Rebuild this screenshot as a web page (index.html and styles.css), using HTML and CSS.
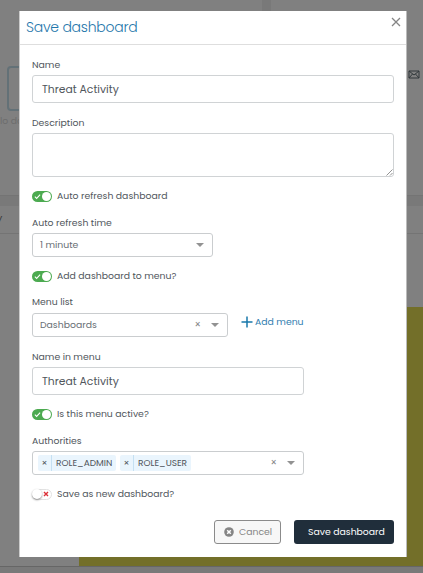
FILE: index.html
```html
<!DOCTYPE html>
<html lang="en">
<head>
<meta charset="utf-8">
<title>Save dashboard</title>
<link rel="stylesheet" href="styles.css">
</head>
<body>
<div class="page">
  <div class="top-panels">
    <div class="panel panel-filter"><div class="ghost-input"></div><div class="ghost-text">lo data</div></div>
    <div class="panel panel-mail">
      <svg class="mail" viewBox="0 0 12 9"><path d="M1 1h10v7H1zM1 1l5 4 5-4M1 8l3.500-4M11 8L7.500 4" fill="none" stroke="#30373a" stroke-width="1"/></svg>
    </div>
  </div>
  <div class="chart-panel">
    <div class="chart-head">y</div>
    <div class="chart-body"><div class="chart-fill"></div></div>
  </div>
</div>
<div class="modal">
  <header class="modal-head">
    <h1>Save dashboard</h1>
    <svg class="close" viewBox="0 0 10 10"><path d="M1 1l8 8M9 1L1 9" stroke="#858585" stroke-width="1.300" fill="none"/></svg>
  </header>
  <form class="modal-body">
    <label class="label">Name</label>
    <div class="input">Threat Activity</div>
    <label class="label label-desc">Description</label>
    <div class="textarea"><svg class="grip" viewBox="0 0 7 7"><path d="M.5 6.500l6-6M4 6.500L6.500 4" stroke="#777" stroke-width=".8"/></svg></div>
    <div class="switch-row">
      <span class="switch on"><svg viewBox="0 0 8 8"><path d="M1 4.200l2 2L7 1.800" fill="none" stroke="#fff" stroke-width="1.200"/></svg></span><span>Auto refresh dashboard</span>
    </div>
    <label class="label label-after">Auto refresh time</label>
    <div class="select select-time"><span>1 minute</span><i class="caret"></i></div>
    <div class="switch-row">
      <span class="switch on"><svg viewBox="0 0 8 8"><path d="M1 4.200l2 2L7 1.800" fill="none" stroke="#fff" stroke-width="1.200"/></svg></span><span>Add dashboard to menu?</span>
    </div>
    <label class="label label-list">Menu list</label>
    <div class="list-row">
      <div class="select select-list"><span>Dashboards</span><span class="clear">×</span><i class="caret"></i></div>
      <a class="add-menu"><svg viewBox="0 0 12 12"><path d="M6 .5v11M.5 6h11" stroke="#1878ab" stroke-width="1.500"/></svg><span>Add menu</span></a>
    </div>
    <label class="label label-after">Name in menu</label>
    <div class="input input-menu">Threat Activity</div>
    <div class="switch-row">
      <span class="switch on"><svg viewBox="0 0 8 8"><path d="M1 4.200l2 2L7 1.800" fill="none" stroke="#fff" stroke-width="1.200"/></svg></span><span>Is this menu active?</span>
    </div>
    <label class="label label-after">Authorities</label>
    <div class="select select-auth">
      <span class="tag tag-admin"><b>×</b><em>ROLE_ADMIN</em></span><span class="tag tag-user"><b>×</b><em>ROLE_USER</em></span>
      <span class="clear">×</span><i class="caret"></i>
    </div>
    <div class="switch-row">
      <span class="switch off"><svg viewBox="0 0 6 6"><path d="M1 1l4 4M5 1L1 5" stroke="#dc3038" stroke-width="1.400"/></svg></span><span>Save as new dashboard?</span>
    </div>
    <footer class="actions">
      <div class="btn cancel"><svg viewBox="0 0 10 10"><circle cx="5" cy="5" r="4.800" fill="#858585"/><path d="M3.200 3.200l3.600 3.600M6.800 3.200L3.200 6.800" stroke="#fff" stroke-width="1.500"/></svg><span>Cancel</span></div>
      <div class="btn save"><span>Save dashboard</span></div>
    </footer>
  </form>
</div>
</body>
</html>
```
FILE: styles.css
```css
* { box-sizing: border-box; }
body {
  margin: 0; width: 423px; height: 573px; overflow: hidden; position: relative;
  font-family: Poppins, Inter, "Liberation Sans", sans-serif;
  font-feature-settings: "cv11" 1;
  font-size: 9.300px; line-height: 14px; color: #50565c; background: #797979;
}
.page { height: 573px; }
.top-panels { display: flex; gap: 9px; height: 196px; }
.panel { background: #808080; border-bottom: 1px solid #747474; }
.panel-filter { width: 262px; padding-top: 66px; }
.panel-mail { flex: 1; padding: 70px 0 0 137px; }
.mail { display: block; width: 12px; height: 9px; }
.ghost-input { margin-left: 7px; width: 80px; height: 45px; border: 2px solid #637177; border-radius: 4px; }
.ghost-text { margin-top: 3px; color: #6d6d6d; }
.chart-panel { margin-top: 10px; height: 361px; background: #808080; border-bottom: 1px solid #666; }
.chart-head { height: 28px; padding-top: 5px; margin-left: -3px; border-bottom: 1px solid #747474; color: #333; }
.chart-body { padding: 73px 0 0 79px; }
.chart-fill { height: 259px; background: #736f29; }
.modal {
  position: absolute; left: 19px; top: 11px; width: 388px; height: 546px;
  background: #fff; border-left: 1px solid #ccc; border-right: 1px solid #bbb;
}
.modal-head { display: flex; justify-content: space-between; height: 34px; padding: 6px 5px 0 6px; border-bottom: 1px solid #dedede; }
h1 { margin: 0; font-size: 14px; line-height: 21px; font-weight: 300; color: #1f77ab; letter-spacing: -.25px; }
.close { width: 10px; height: 10px; }
.modal-body { padding: 13px 12px 0; }
.label { display: block; height: 14px; }
.input { height: 28px; margin-top: 3px; padding: 0 9px; line-height: 27px; border: 1px solid #d0d3d5; border-radius: 3px; font-size: 10.800px; }
.label-desc { margin-top: 13px; }
.textarea { height: 44px; margin-top: 3px; border: 1px solid #d0d3d5; border-radius: 3px; display: flex; justify-content: flex-end; align-items: flex-end; }
.grip { width: 7px; height: 7px; }
.switch-row { display: flex; align-items: center; gap: 5px; height: 14px; margin-top: 12px; }
.switch { display: flex; align-items: center; width: 20px; height: 11px; border-radius: 6px; }
.on { background: #4caa50; padding-left: 2px; }
.on::after { content: ""; width: 9px; height: 9px; border-radius: 50%; background: #fff; margin-left: auto; margin-right: 1px; }
.on svg { width: 7px; height: 7px; }
.off { background: #fff; border: 1px solid #e2e2e2; }
.off::before { content: ""; width: 10px; height: 10px; border-radius: 50%; background: #fff; box-shadow: 0 1px 2px #888; margin-left: -1px; }
.off svg { width: 6px; height: 6px; margin-left: 1px; }
.label-after { margin-top: 13px; }
.select { display: flex; align-items: center; height: 24px; margin-top: 3px; padding: 0 8px 0 7px; border: 1px solid #cacdcf; border-radius: 3px; color: #686e74; }
.caret { border: 4px solid transparent; border-top-color: #929292; border-bottom: 0; margin-left: auto; }
.clear { margin-left: auto; color: #888; font-size: 10px; }
.clear + .caret { margin-left: 10px; }
.select-time { width: 181px; }
.label-list { margin-top: 12px; }
.list-row { display: flex; margin-top: 4px; gap: 13px; }
.select-list { width: 196px; margin-top: 0; }
.add-menu { display: flex; align-items: center; gap: 2px; height: 18px; color: #2f7daf; }
.add-menu svg { width: 12px; height: 12px; }
.input-menu { width: 272px; }
.select-auth { width: 272px; padding-left: 5px; }
.tag { display: flex; height: 16px; line-height: 16px; background: #eaf5fd; border-radius: 2px; color: #50565c; }
.tag b { width: 14px; font-weight: 400; text-align: center; border-right: 1px solid #c5e0f2; }
.tag em { flex: 1; font-style: normal; padding-left: 4px; white-space: nowrap; font-size: 9px; }
.tag-admin { width: 78px; margin-right: 4px; }
.tag-user { width: 71px; }
.actions { display: flex; justify-content: flex-end; gap: 13px; margin-top: 19px; }
.btn { display: flex; align-items: center; height: 24px; border-radius: 3px; white-space: nowrap; }
.cancel { width: 67px; padding-left: 9px; gap: 5px; border: 1px solid #8b8b8b; background: #f7f7f7; color: #858585; }
.cancel svg { width: 10px; height: 10px; }
.save { width: 100px; padding-left: 14px; background: #202e3b; color: #fff; }
```
